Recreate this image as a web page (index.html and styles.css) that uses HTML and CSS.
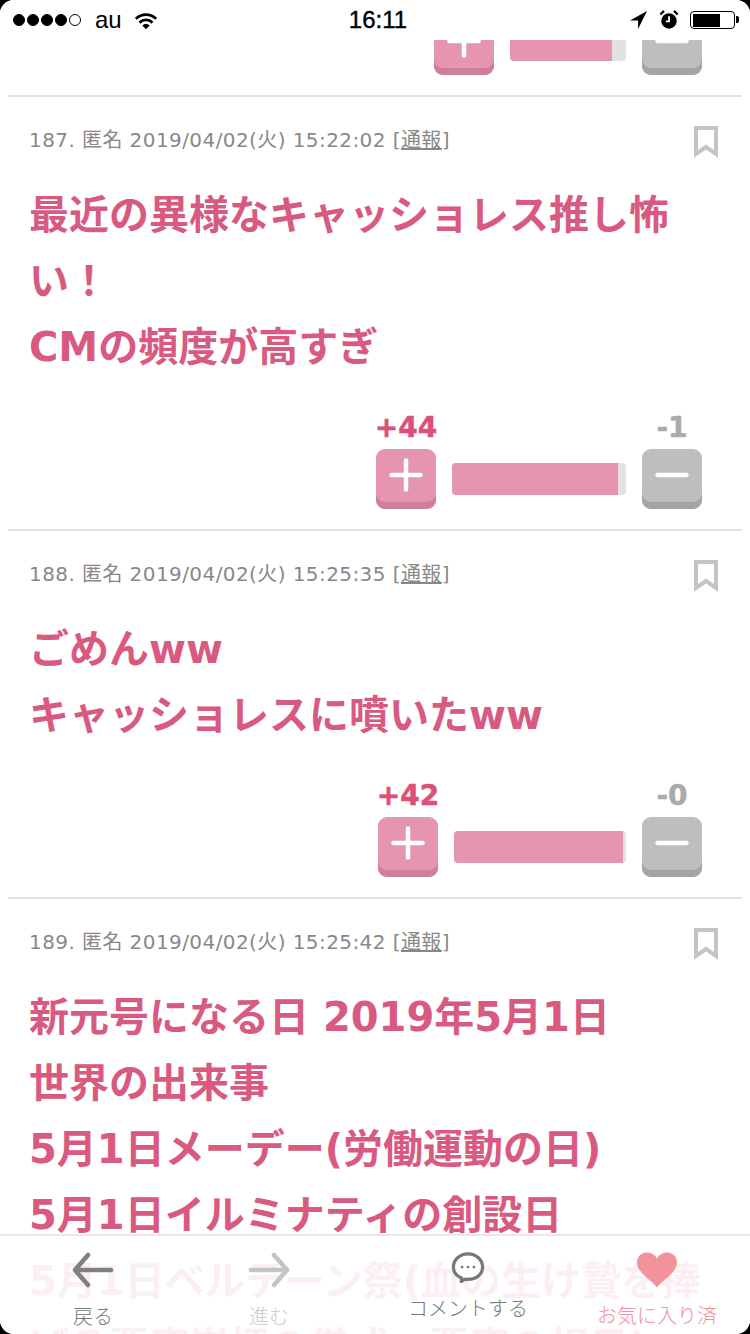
FILE: index.html
```html
<!DOCTYPE html>
<html lang="ja">
<head>
<meta charset="utf-8">
<title>コメント</title>
<link rel="stylesheet" href="styles.css">
</head>
<body>
<svg class="defs" width="0" height="0" aria-hidden="true">
  <symbol id="plus" viewBox="0 0 60 53"><path d="M15.5 26h29M30 11.5v29" stroke="#fff" stroke-width="4.5" stroke-linecap="round" fill="none"/></symbol>
  <symbol id="minus" viewBox="0 0 60 53"><path d="M15.5 26h29" stroke="#fff" stroke-width="4.5" stroke-linecap="round" fill="none"/></symbol>
  <symbol id="mark" viewBox="0 0 24 32"><path d="M2 2h20v26l-10-7-10 7z" stroke="#c4c4c4" stroke-width="4" fill="none"/></symbol>
</svg>
<div class="screen">
  <header class="status">
    <div class="status-left">
      <span class="signal"><i></i><i></i><i></i><i></i><i class="off"></i></span>
      <span class="carrier">au</span>
      <svg class="wifi" width="24" height="19" viewBox="0 0 26 20"><path d="M1 7a17 17 0 0 1 24 0l-2 2.2a14 14 0 0 0-20 0z M5 11.2a11.5 11.5 0 0 1 16 0l-2 2.2a8.500 8.500 0 0 0-12 0z M9 15.400a6 6 0 0 1 8 0L13 19.500z" fill="#000"/></svg>
    </div>
    <div class="time">16:11</div>
    <div class="status-right">
      <svg width="19" height="18" viewBox="0 0 19 20"><path d="M19 0L0 10.500h9V20z" fill="#000"/></svg>
      <svg width="20" height="20" viewBox="0 0 21 22"><circle cx="10.500" cy="12" r="8.500" fill="#000"/><path d="M1 5l4-4M20 5l-4-4" stroke="#000" stroke-width="2.500"/><path d="M10.500 7v5.500H7" stroke="#fff" stroke-width="2" fill="none"/></svg>
      <span class="battery"><span class="battery-level"></span></span>
    </div>
  </header>

  <main class="feed">
    <section class="comment comment-clipped">
      <div class="vote">
        <div class="vote-col"><button class="btn btn-up"><svg width="60" height="53"><use href="#plus"/></svg></button></div>
        <div class="bar" style="width:116px"><div class="bar-fill" style="width:102px"></div></div>
        <div class="vote-col"><button class="btn btn-down"><svg width="60" height="53"><use href="#minus"/></svg></button></div>
      </div>
    </section>

    <section class="comment">
      <div class="meta"><span>187. 匿名 2019/04/02(火) 15:22:02 [<u>通報</u>]</span><svg width="24" height="32"><use href="#mark"/></svg></div>
      <p class="body">最近の異様なキャッショレス推し怖い！<br>CMの頻度が高すぎ</p>
      <div class="vote">
        <div class="vote-col"><span class="count count-up">+44</span><button class="btn btn-up"><svg width="60" height="53"><use href="#plus"/></svg></button></div>
        <div class="bar" style="width:174px"><div class="bar-fill" style="width:166px"></div></div>
        <div class="vote-col"><span class="count count-down">-1</span><button class="btn btn-down"><svg width="60" height="53"><use href="#minus"/></svg></button></div>
      </div>
    </section>

    <section class="comment">
      <div class="meta"><span>188. 匿名 2019/04/02(火) 15:25:35 [<u>通報</u>]</span><svg width="24" height="32"><use href="#mark"/></svg></div>
      <p class="body">ごめんww<br>キャッショレスに噴いたww</p>
      <div class="vote">
        <div class="vote-col"><span class="count count-up">+42</span><button class="btn btn-up"><svg width="60" height="53"><use href="#plus"/></svg></button></div>
        <div class="bar" style="width:172px"><div class="bar-fill" style="width:169px"></div></div>
        <div class="vote-col"><span class="count count-down">-0</span><button class="btn btn-down"><svg width="60" height="53"><use href="#minus"/></svg></button></div>
      </div>
    </section>

    <section class="comment">
      <div class="meta"><span>189. 匿名 2019/04/02(火) 15:25:42 [<u>通報</u>]</span><svg width="24" height="32"><use href="#mark"/></svg></div>
      <p class="body">新元号になる日 2019年5月1日<br>世界の出来事<br>5月1日メーデー(労働運動の日)<br>5月1日イルミナティの創設日<br>5月1日ベルテーン祭(血の生け贄を捧げる悪魔崇拝の儀式、悪魔の祝日)</p>
    </section>
  </main>

  <nav class="tabs">
    <div class="tab tab-back">
      <svg width="42" height="36" viewBox="0 0 42 36"><path d="M39 18H3M16 3L3 18l13 15" stroke="#808080" stroke-width="4.500" stroke-linecap="round" stroke-linejoin="round" fill="none"/></svg>
      <span class="tab-label">戻る</span>
    </div>
    <div class="tab tab-next">
      <svg width="42" height="36" viewBox="0 0 42 36"><path d="M3 18h36M26 3l13 15-13 15" stroke="#c4c4c4" stroke-width="4.500" stroke-linecap="round" stroke-linejoin="round" fill="none"/></svg>
      <span class="tab-label">進む</span>
    </div>
    <div class="tab tab-comment">
      <svg width="34" height="31" viewBox="0 0 36 34"><path d="M11 28.500C5 26 2 21.500 2 16.500 2 8.500 9 2 18 2s16 6.500 16 14.500S27 30 18 30c-1 0-2 0-3-.2L10.500 32.500z" stroke="#777" stroke-width="3.500" stroke-linejoin="round" fill="#fff"/><circle cx="11.500" cy="16.500" r="1.500" fill="#777"/><circle cx="18" cy="16.500" r="1.500" fill="#777"/><circle cx="24.500" cy="16.500" r="1.500" fill="#777"/></svg>
      <span class="tab-label">コメントする</span>
    </div>
    <div class="tab tab-fav">
      <svg width="40" height="36" viewBox="0 0 42 37"><path d="M21 37C14 28 0 21 0 10.500 0 4 5 0 10.500 0 15 0 19 2.500 21 6.500 23 2.500 27 0 31.500 0 37 0 42 4 42 10.500 42 21 28 28 21 37z" fill="#f2939c"/></svg>
      <span class="tab-label">お気に入り済</span>
    </div>
  </nav>
</div>
</body>
</html>
```

FILE: styles.css
```css
* { box-sizing: border-box; }
html, body { margin: 0; padding: 0; background: #000; }
.defs { position: absolute; }
.screen {
  position: relative;
  width: 750px;
  height: 1334px;
  background: #fff;
  border-radius: 14px;
  overflow: hidden;
  display: flex;
  flex-direction: column;
  font-family: "DejaVu Sans", "Noto Sans CJK JP", sans-serif;
}

/* status bar */
.status {
  flex: none;
  height: 40px;
  display: grid;
  grid-template-columns: 1fr auto 1fr;
  align-items: center;
  padding: 0 15px 0 13px;
  background: #fff;
  position: relative;
  z-index: 2;
  color: #000;
  font-family: "Liberation Sans", sans-serif;
}
.status-left { display: flex; align-items: center; }
.signal { display: flex; gap: 2px; }
.signal i { width: 12px; height: 12px; border-radius: 50%; background: #000; border: 1px solid #000; }
.signal i.off { background: #fff; }
.carrier { font-size: 24px; margin-left: 14px; line-height: 30px; }
.wifi { margin-left: 12px; }
.time { font-size: 24px; margin-left: 8px; -webkit-text-stroke: 0.4px #000; }
.status-right { display: flex; align-items: center; justify-content: flex-end; gap: 11px; }
.battery {
  width: 45px;
  height: 18px;
  border: 1.5px solid #000;
  border-radius: 4px;
  padding: 1.5px;
  position: relative;
  display: block;
}
.battery::after {
  content: "";
  position: absolute;
  right: -5px;
  top: 4px;
  width: 3px;
  height: 7px;
  background: #000;
  border-radius: 0 2px 2px 0;
}
.battery-level { display: block; width: 27px; height: 100%; background: #000; }

/* feed */
.feed { flex: 1; overflow: hidden; padding: 0 8px; }
.comment { border-bottom: 2px solid #e4e4e4; padding-bottom: 20px; }
.comment-clipped { margin-top: -25px; }
.meta {
  display: flex;
  justify-content: space-between;
  align-items: center;
  height: 30px;
  margin-top: 28px;
  padding: 0 24px 0 21px;
  font-size: 20px;
  line-height: 30px;
  letter-spacing: 0.42px;
  color: #888;
}
.meta svg { margin-top: 4px; }
.body {
  margin: 27px 0 0;
  padding: 0 35px 0 21px;
  font-size: 40px;
  font-weight: 700;
  line-height: 66px;
  color: #d95a80;
}

/* votes */
.vote { display: flex; justify-content: flex-end; align-items: flex-end; gap: 16px; margin-top: 31px; padding-right: 40px; }
.comment-clipped .vote { margin-top: 0; }
.vote-col { display: flex; flex-direction: column; align-items: center; width: 60px; }
.count {
  font-size: 28px;
  font-weight: 700;
  line-height: 34px;
  margin-bottom: 4px;
  white-space: nowrap;
  -webkit-text-stroke: 0.5px currentColor;
}
.count-up { color: #dd5078; }
.count-down { color: #aaa; }
.btn { display: block; width: 60px; height: 60px; border: 0; padding: 0 0 7px; border-radius: 9px; }
.btn svg { display: block; }
.btn-up { background: #e595ae; box-shadow: inset 0 -7px 0 #cf7f98; }
.btn-down { background: #bebebe; box-shadow: inset 0 -7px 0 #a4a4a4; }
.bar { height: 32px; margin-bottom: 14px; background: #e2e2e2; border-radius: 4px; overflow: hidden; }
.bar-fill { height: 100%; background: #e595ae; }

/* tab bar */
.tabs {
  position: absolute;
  left: 0;
  right: 0;
  bottom: 0;
  height: 100px;
  border-top: 2px solid #eaeaea;
  background: rgba(255, 255, 255, 0.9);
  display: grid;
  grid-template-columns: 186px 166px 232px 146px;
  padding-top: 16px;
}
.tab { display: flex; flex-direction: column; align-items: center; }
.tab svg { display: block; }
.tab-label { font-size: 20px; line-height: 30px; font-family: "Noto Sans CJK JP", sans-serif; font-weight: 300; white-space: nowrap; }
.tab-back .tab-label { color: #777; margin-top: 13px; }
.tab-next .tab-label { color: #ccc; margin-top: 13px; }
.tab-comment .tab-label { color: #777; margin-top: 10px; }
.tab-fav .tab-label { color: #f2939c; margin-top: 12px; }
```
